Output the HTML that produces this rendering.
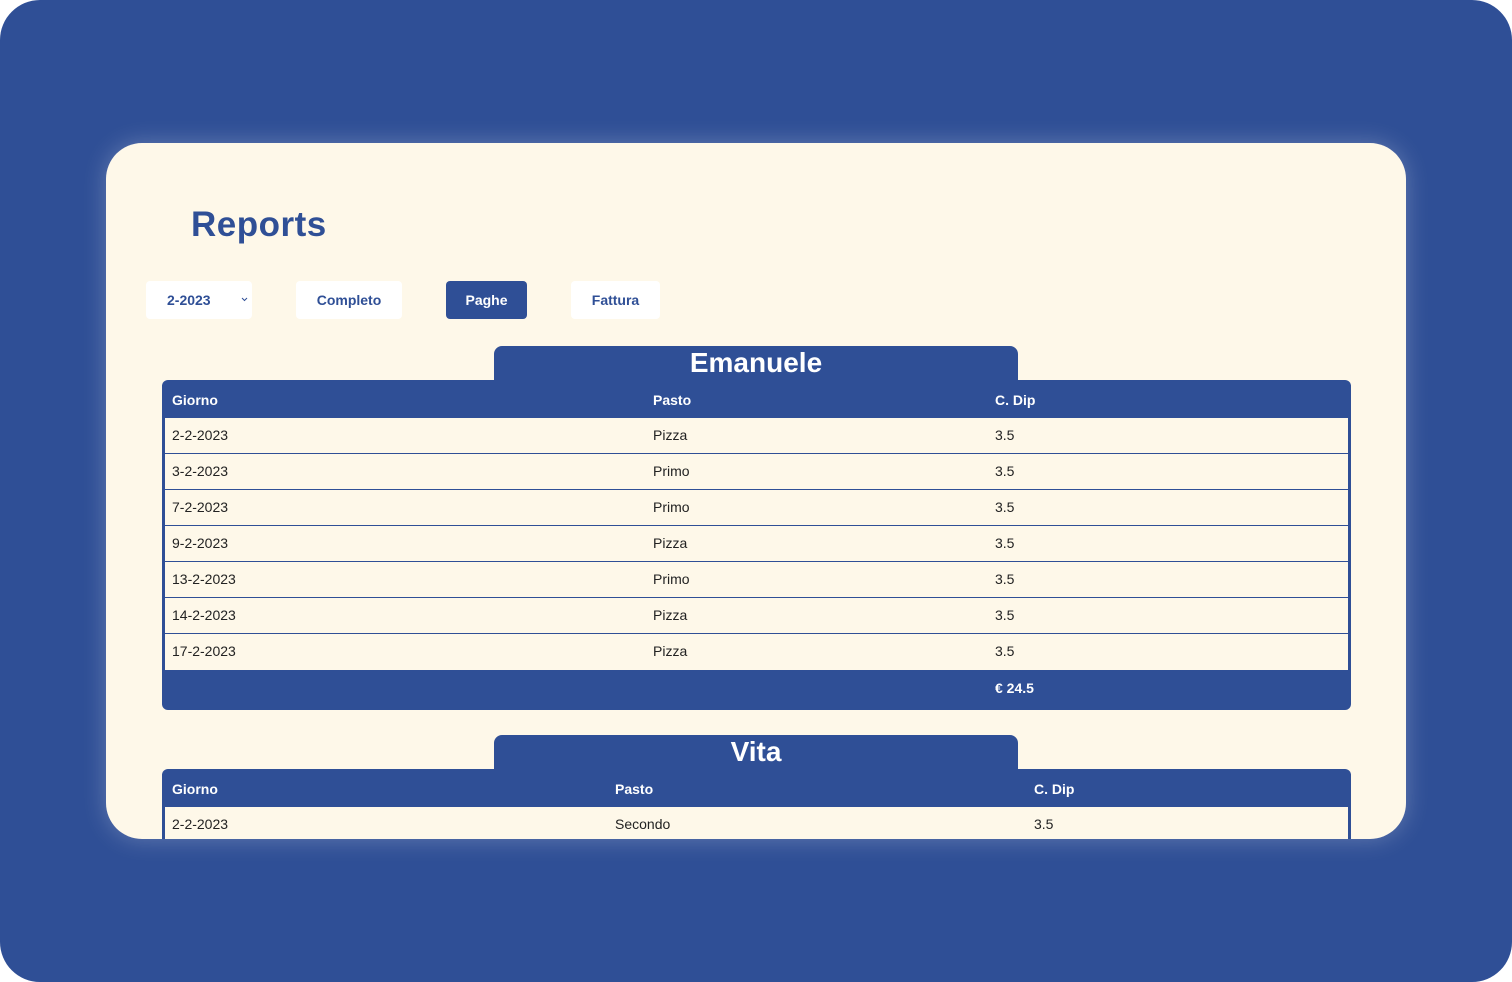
<!DOCTYPE html>
<html><head><meta charset="utf-8"><style>
*{box-sizing:border-box;margin:0;padding:0}
html,body{width:1512px;height:982px;background:#fff;overflow:hidden;font-family:"Liberation Sans",sans-serif}
.bg{position:absolute;left:0;top:0;width:1512px;height:982px;background:#2f4f96;border-radius:40px}
.card{position:absolute;left:106px;top:143px;width:1300px;height:696px;background:#fef8e9;border-radius:36px;overflow:hidden;box-shadow:0 0 24px rgba(255,255,255,.25)}
h1{position:absolute;left:85px;top:62px;font-size:35px;color:#2f4f96;font-weight:bold;letter-spacing:0.5px}
.btn{position:absolute;top:138px;height:38px;background:#fff;border-radius:4px;color:#2f4f96;font-weight:bold;font-size:14px;line-height:38px;text-align:center}
.btn.on{background:#2f4f96;color:#fff}
.tab{position:absolute;left:388px;width:524px;height:36px;background:#2f4f96;border-radius:8px 8px 0 0;color:#fff;font-weight:bold;font-size:28px;text-align:center;line-height:34px}
.tbl{position:absolute;left:56px;width:1189px;background:#2f4f96;border-radius:6px;padding:0 3px}
.row{position:relative;height:36px;font-size:14px;color:#222;line-height:35px;border-bottom:1px solid #2f4f96;background:#fef8e9}
.row span,.hd span,.ft span{position:absolute;top:0}
.hd{position:relative;height:38px;color:#fff;font-weight:bold;font-size:14px;line-height:40px}
.ft{position:relative;height:40px;color:#fff;font-weight:bold;font-size:14px;line-height:36px}
</style></head><body>
<div class="bg"></div>
<div class="card">
<h1>Reports</h1>
<div class="btn" style="left:40px;width:106px;text-align:left;padding-left:21px">2-2023<svg style="position:absolute;left:95px;top:16px" width="7" height="5" viewBox="0 0 7 5"><path d="M1 1l2.5 2.5L6 1" fill="none" stroke="#2f4f96" stroke-width="1"/></svg></div>
<div class="btn" style="left:190px;width:106px">Completo</div>
<div class="btn on" style="left:340px;width:81px">Paghe</div>
<div class="btn" style="left:465px;width:89px">Fattura</div>

<div class="tab" style="top:203px">Emanuele</div>
<div class="tbl" style="top:237px">
<div class="hd"><span style="left:7px">Giorno</span><span style="left:488px">Pasto</span><span style="left:830px">C. Dip</span></div>
<div class="row"><span style="left:7px">2-2-2023</span><span style="left:488px">Pizza</span><span style="left:830px">3.5</span></div>
<div class="row"><span style="left:7px">3-2-2023</span><span style="left:488px">Primo</span><span style="left:830px">3.5</span></div>
<div class="row"><span style="left:7px">7-2-2023</span><span style="left:488px">Primo</span><span style="left:830px">3.5</span></div>
<div class="row"><span style="left:7px">9-2-2023</span><span style="left:488px">Pizza</span><span style="left:830px">3.5</span></div>
<div class="row"><span style="left:7px">13-2-2023</span><span style="left:488px">Primo</span><span style="left:830px">3.5</span></div>
<div class="row"><span style="left:7px">14-2-2023</span><span style="left:488px">Pizza</span><span style="left:830px">3.5</span></div>
<div class="row" style="border-bottom:0"><span style="left:7px">17-2-2023</span><span style="left:488px">Pizza</span><span style="left:830px">3.5</span></div>
<div class="ft"><span style="left:830px;top:0">€ 24.5</span></div>
</div>

<div class="tab" style="top:592px">Vita</div>
<div class="tbl" style="top:626px">
<div class="hd"><span style="left:7px">Giorno</span><span style="left:450px">Pasto</span><span style="left:869px">C. Dip</span></div>
<div class="row"><span style="left:7px">2-2-2023</span><span style="left:450px">Secondo</span><span style="left:869px">3.5</span></div>
<div class="row"><span style="left:7px">3-2-2023</span><span style="left:450px">Primo</span><span style="left:869px">3.5</span></div>
</div>
</div>
</body></html>
